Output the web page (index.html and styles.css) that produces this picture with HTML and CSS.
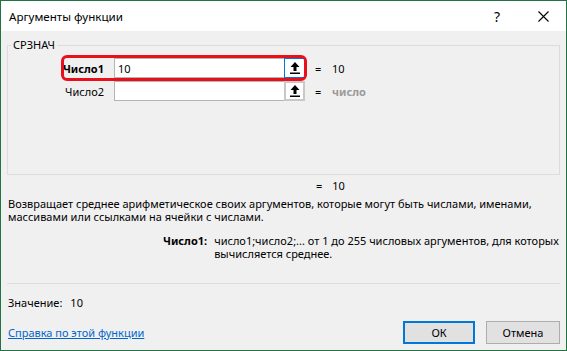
FILE: index.html
```html
<!DOCTYPE html>
<html lang="ru">
<head>
    <meta charset="UTF-8">
    <title>Аргументы функции</title>
    <link rel="stylesheet" href="styles.css">
</head>
<body>
    <div class="dialog">
        <div class="titlebar">
            <span class="title">Аргументы функции</span>
            <span class="help">?</span>
            <span class="close">
                <svg width="11" height="11" viewBox="0 0 11 11"><path d="M0.5 0.5 L10.5 10.5 M10.5 0.5 L0.5 10.5" stroke="#000" stroke-width="1.1" fill="none"/></svg>
            </span>
        </div>

        <div class="content">
            <fieldset class="group">
                <legend>СРЗНАЧ</legend>
                <div class="args">
                    <label class="arg-label bold" for="num1">Число1</label>
                    <div class="ref">
                        <input type="text" id="num1" value="10">
                        <button class="pick active">
                            <svg width="10" height="12" viewBox="0 0 10 12"><path d="M5 0 L0.5 5 H3.5 V9 H6.5 V5 H9.5 Z M0 10.5 H10 V12 H0 Z" fill="#000"/></svg>
                        </button>
                    </div>
                    <span class="eq">=</span>
                    <span class="val">10</span>

                    <label class="arg-label" for="num2">Число2</label>
                    <div class="ref">
                        <input type="text" id="num2" value="">
                        <button class="pick">
                            <svg width="10" height="12" viewBox="0 0 10 12"><path d="M5 0 L0.5 5 H3.5 V9 H6.5 V5 H9.5 Z M0 10.5 H10 V12 H0 Z" fill="#000"/></svg>
                        </button>
                    </div>
                    <span class="eq">=</span>
                    <span class="val muted">число</span>

                    <!-- рамка выделения поверх первой строки -->
                    <span class="focus-ring"></span>
                </div>
            </fieldset>

            <div class="result"><span>=</span><span>10</span></div>

            <p class="desc">Возвращает среднее арифметическое своих аргументов, которые могут быть числами, именами,<br>массивами или ссылками на ячейки с числами.</p>

            <div class="arg-help">
                <span class="bold">Число1:</span>
                <span>число1;число2;... от 1 до 255 числовых аргументов, для которых<br>вычисляется среднее.</span>
            </div>

            <hr class="sep">

            <div class="value">Значение:<span>10</span></div>

            <div class="footer">
                <a href="#" class="help-link">Справка по этой функции</a>
                <div class="buttons">
                    <button class="btn default">ОК</button>
                    <button class="btn">Отмена</button>
                </div>
            </div>
        </div>
    </div>
</body>
</html>
```

FILE: styles.css
```css
* {
    box-sizing: border-box;
}
html, body {
    margin: 0;
}
body {
    font-family: "Noto Sans", "Liberation Sans", sans-serif;
    font-size: 11px;
    color: #000;
    white-space: nowrap;
}
.dialog {
    width: 567px;
    height: 351px;
    border: 1px solid #217346;
    background: #f0f0f0;
    display: flex;
    flex-direction: column;
}
.titlebar {
    height: 30px;
    background: #fff;
    display: flex;
    align-items: center;
    padding-left: 8px;
    font-size: 11.6px;
}
.title {
    flex: 1;
}
.help {
    font-size: 14px;
    width: 20px;
    text-align: center;
    margin-right: 13px;
}
.close {
    width: 46px;
    display: flex;
    justify-content: center;
}
.content {
    flex: 1;
    padding: 6px 6px 0;
    display: flex;
    flex-direction: column;
}
.group {
    margin: 0;
    padding: 0;
    height: 138px;
    flex: none;
    border: 1px solid #dcdcdc;
}
.group legend {
    margin-left: 3px;
    padding: 0 2px;
    line-height: 16px;
}
.args {
    position: relative;
    display: grid;
    grid-template-columns: 96px 191px 7px 1fr;
    grid-template-rows: 20px 20px;
    column-gap: 10px;
    row-gap: 3px;
    margin-top: 5px;
    align-items: center;
}
.arg-label {
    text-align: right;
}
.bold {
    font-weight: bold;
}
.ref {
    display: flex;
    height: 20px;
}
.ref input {
    width: 170px;
    height: 20px;
    border: 1px solid #b4b4b4;
    border-right: none;
    padding: 0 3px;
    font: inherit;
    background: #fff;
    outline: none;
}
.pick {
    width: 21px;
    height: 20px;
    padding: 0;
    border: 2px solid #c8c8c8;
    background: #fff;
    display: flex;
    align-items: center;
    justify-content: center;
}
.pick.active {
    border: 1px solid #0078d7;
}
.val.muted {
    color: #9a9a9a;
    font-weight: bold;
}
.focus-ring {
    position: absolute;
    left: 53px;
    top: -3px;
    width: 246px;
    height: 26px;
    border: 3px solid #e8101a;
    border-radius: 6px;
    pointer-events: none;
}
.result {
    display: flex;
    gap: 10px;
    padding-left: 309px;
    margin-top: 3px;
    line-height: 16px;
}
.desc {
    margin: 3px 0 0 1px;
    line-height: 13px;
}
.arg-help {
    display: flex;
    gap: 7px;
    padding-left: 156px;
    margin-top: 11px;
    line-height: 13px;
}
.sep {
    margin: 23px 0 0;
    border: none;
    border-top: 1px solid #dcdcdc;
}
.value {
    margin: 11px 0 0 1px;
    line-height: 16px;
}
.value span {
    margin-left: 8px;
}
.footer {
    display: flex;
    align-items: center;
    justify-content: space-between;
    margin-top: 10px;
    padding-left: 1px;
}
.help-link {
    color: #0066cc;
}
.buttons {
    display: flex;
    gap: 11px;
}
.btn {
    width: 74px;
    height: 23px;
    font: inherit;
    background: #e1e1e1;
    border: 1px solid #adadad;
    padding: 0;
}
.btn.default {
    width: 72px;
    border: 2px solid #0078d7;
}
```
